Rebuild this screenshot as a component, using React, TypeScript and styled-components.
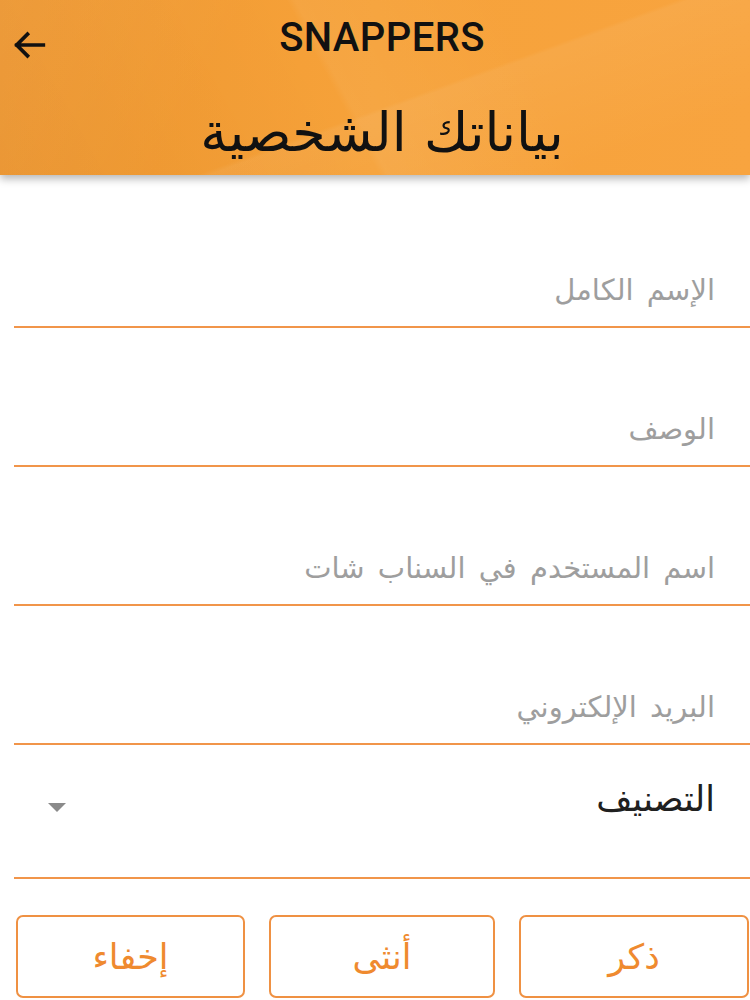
import React from "react";
import styled, { createGlobalStyle } from "styled-components";

const GlobalStyle = createGlobalStyle`
  html, body {
    margin: 0;
    padding: 0;
    background: #ffffff;
  }
  body {
    width: 750px;
    height: 1000px;
    overflow: hidden;
    font-family: "DejaVu Sans", "Noto Sans", sans-serif;
  }
`;

const Page = styled.div`
  width: 750px;
  height: 1000px;
  display: flex;
  flex-direction: column;
  background: #ffffff;
`;

const Header = styled.header`
  position: relative;
  z-index: 2;
  height: 175px;
  display: flex;
  flex-direction: column;
  background:
    linear-gradient(118deg, rgba(255, 255, 255, 0.06) 0%, rgba(255, 255, 255, 0) 30%),
    linear-gradient(62deg, rgba(0, 0, 0, 0.03) 0%, rgba(0, 0, 0, 0) 45%, rgba(255, 255, 255, 0.05) 46%, rgba(255, 255, 255, 0) 70%),
    linear-gradient(160deg, rgba(255, 255, 255, 0) 55%, rgba(255, 255, 255, 0.06) 56%, rgba(255, 255, 255, 0) 85%),
    linear-gradient(90deg, #f1982f 0%, #f6a23a 50%, #f8a43f 100%);
  box-shadow: 0 4px 8px rgba(0, 0, 0, 0.28);
`;

const TopBar = styled.div`
  height: 76px;
  display: grid;
  grid-template-columns: 80px 1fr 66px;
  align-items: center;
`;

const BackButton = styled.button`
  border: 0;
  background: transparent;
  padding: 0 0 0 10px;
  height: 76px;
  display: flex;
  align-items: center;
  cursor: pointer;
  margin-top: 7px;
`;

const Brand = styled.h1`
  margin: -9px 0 0;
  text-align: center;
  font-family: Roboto, "Liberation Sans", sans-serif;
  font-weight: 500;
  font-size: 40px;
  letter-spacing: 0.4px;
  color: #111111;
`;

const Title = styled.h2`
  margin: 22px 0 0;
  padding-left: 14px;
  direction: rtl;
  text-align: center;
  font-family: "DejaVu Sans", sans-serif;
  font-weight: 400;
  font-size: 54px;
  line-height: 70px;
  color: #111111;
`;

const Form = styled.div`
  display: flex;
  flex-direction: column;
  padding-left: 14px;
`;

const Field = styled.div<{ $h: number }>`
  height: ${({ $h }) => $h}px;
  box-sizing: border-box;
  border-bottom: 2.5px solid #f1954a;
  display: flex;
  align-items: flex-end;
  justify-content: space-between;
  direction: rtl;
  padding: 0 35px 16px 0;
`;

const Placeholder = styled.span<{ $dark?: boolean }>`
  font-size: ${({ $dark }) => ($dark ? 35 : 29)}px;
  word-spacing: 4px;
  color: ${({ $dark }) => ($dark ? "#202020" : "#9e9e9e")};
  line-height: 40px;
`;

const Select = styled(Field)`
  align-items: center;
  padding: 0 35px 24px 0;
`;

const Caret = styled.span`
  width: 0;
  height: 0;
  margin-left: 34px;
  margin-top: 16px;
  border-left: 9px solid transparent;
  border-right: 9px solid transparent;
  border-top: 9px solid #8a8a8a;
`;

const Choices = styled.div`
  direction: rtl;
  display: grid;
  grid-template-columns: 230px 226px 229px;
  justify-content: space-between;
  padding: 36px 1px 0 16px;
`;

const Choice = styled.button`
  height: 83px;
  box-sizing: border-box;
  border: 2px solid #ef9143;
  border-radius: 7px;
  background: #ffffff;
  color: #ef8a2f;
  font-family: "DejaVu Sans", sans-serif;
  font-size: 35px;
  cursor: pointer;
`;

const fields: { label: string; h: number }[] = [
  { label: "الإسم الكامل", h: 153 },
  { label: "الوصف", h: 139 },
  { label: "اسم المستخدم في السناب شات", h: 139 },
  { label: "البريد الإلكتروني", h: 139 },
];

const App = () => {
  return (
    <>
      <GlobalStyle />
      <Page>
        <Header>
          <TopBar>
            <BackButton aria-label="back">
              <svg width="40" height="40" viewBox="0 0 24 24" fill="none">
                <path
                  d="M20 12H4M10.5 5.5 4 12l6.5 6.5"
                  stroke="#111"
                  strokeWidth="2.2"
                  strokeLinecap="square"
                />
              </svg>
            </BackButton>
            <Brand>SNAPPERS</Brand>
            <span />
          </TopBar>
          <Title>بياناتك الشخصية</Title>
        </Header>
        <Form>
          {fields.map((f) => (
            <Field key={f.label} $h={f.h}>
              <Placeholder>{f.label}</Placeholder>
            </Field>
          ))}
          <Select $h={134}>
            <Placeholder $dark>التصنيف</Placeholder>
            <Caret />
          </Select>
        </Form>
        <Choices>
          <Choice>ذكر</Choice>
          <Choice>أنثى</Choice>
          <Choice>إخفاء</Choice>
        </Choices>
      </Page>
    </>
  );
};

export default App;
